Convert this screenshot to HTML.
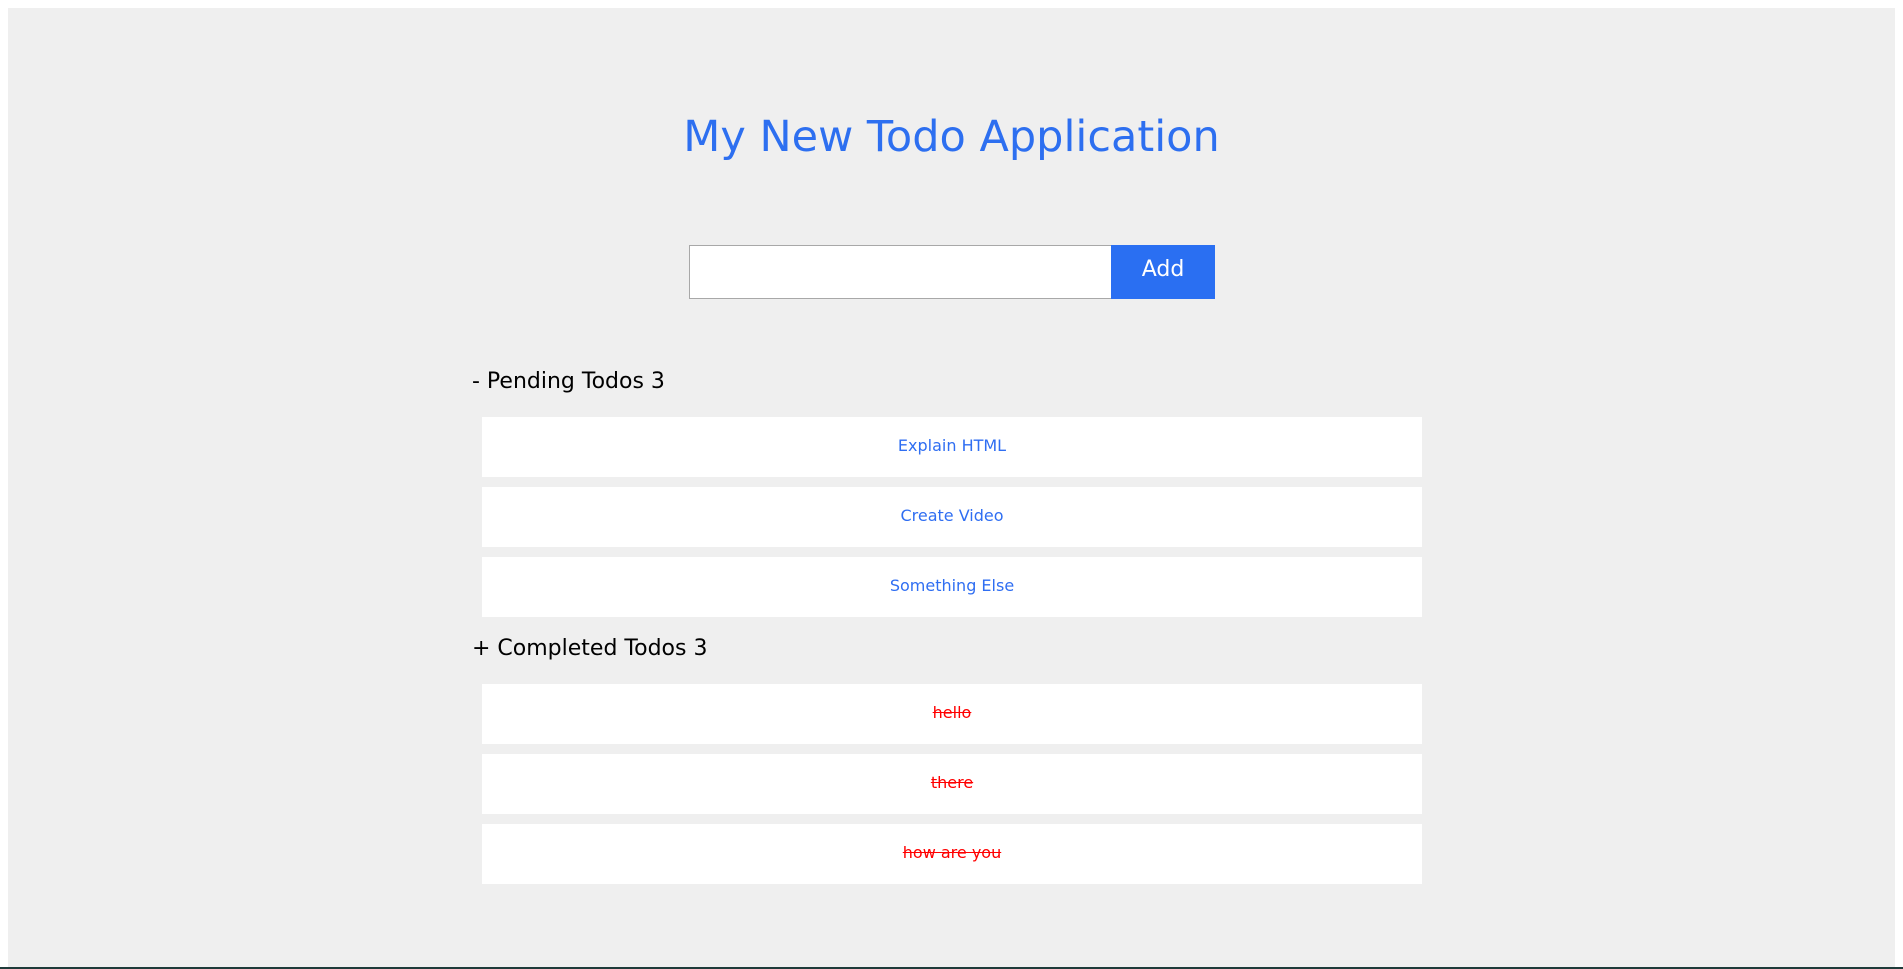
<!DOCTYPE html>
<html><head><meta charset="utf-8"><style>
html,body{margin:0;padding:0;background:#fff;width:1903px;height:969px;overflow:hidden;font-family:"Comic Sans MS","DejaVu Sans","Liberation Sans",sans-serif;}
#app{position:absolute;left:8px;top:8px;width:1887px;height:960px;background:#efefef;}
.bar{position:absolute;left:0;top:967px;width:1903px;height:2px;background:#1f3b3a;}
h1{position:absolute;left:0;width:1887px;top:101px;margin:0;text-align:center;font-weight:normal;color:#2d6ff0;font-size:43px;line-height:56px;}
.inp{position:absolute;left:681px;top:237px;width:424px;height:54px;background:#fff;border:1px solid #a8a8a8;box-sizing:border-box;}
.btn{position:absolute;left:1103px;top:237px;width:104px;height:54px;background:#2a6ff2;color:#fff;font-size:22px;line-height:50px;text-align:center;}
.hd{position:absolute;left:464px;font-size:22px;color:#000;line-height:28px;}
.card{position:absolute;left:474px;width:940px;height:60px;background:#fff;text-align:center;line-height:58px;font-size:16px;color:#2f6ef2;}
.done{color:#f00;text-decoration:line-through;}
</style></head><body>
<div id="app">
<h1>My New Todo Application</h1>
<div class="inp"></div>
<div class="btn">Add</div>
<div class="hd" style="top:360px">- Pending Todos 3</div>
<div class="card" style="top:409px">Explain HTML</div>
<div class="card" style="top:479px">Create Video</div>
<div class="card" style="top:549px">Something Else</div>
<div class="hd" style="top:627px">+ Completed Todos 3</div>
<div class="card done" style="top:676px">hello</div>
<div class="card done" style="top:746px">there</div>
<div class="card done" style="top:816px">how are you</div>
</div>
<div class="bar"></div>
</body></html>
